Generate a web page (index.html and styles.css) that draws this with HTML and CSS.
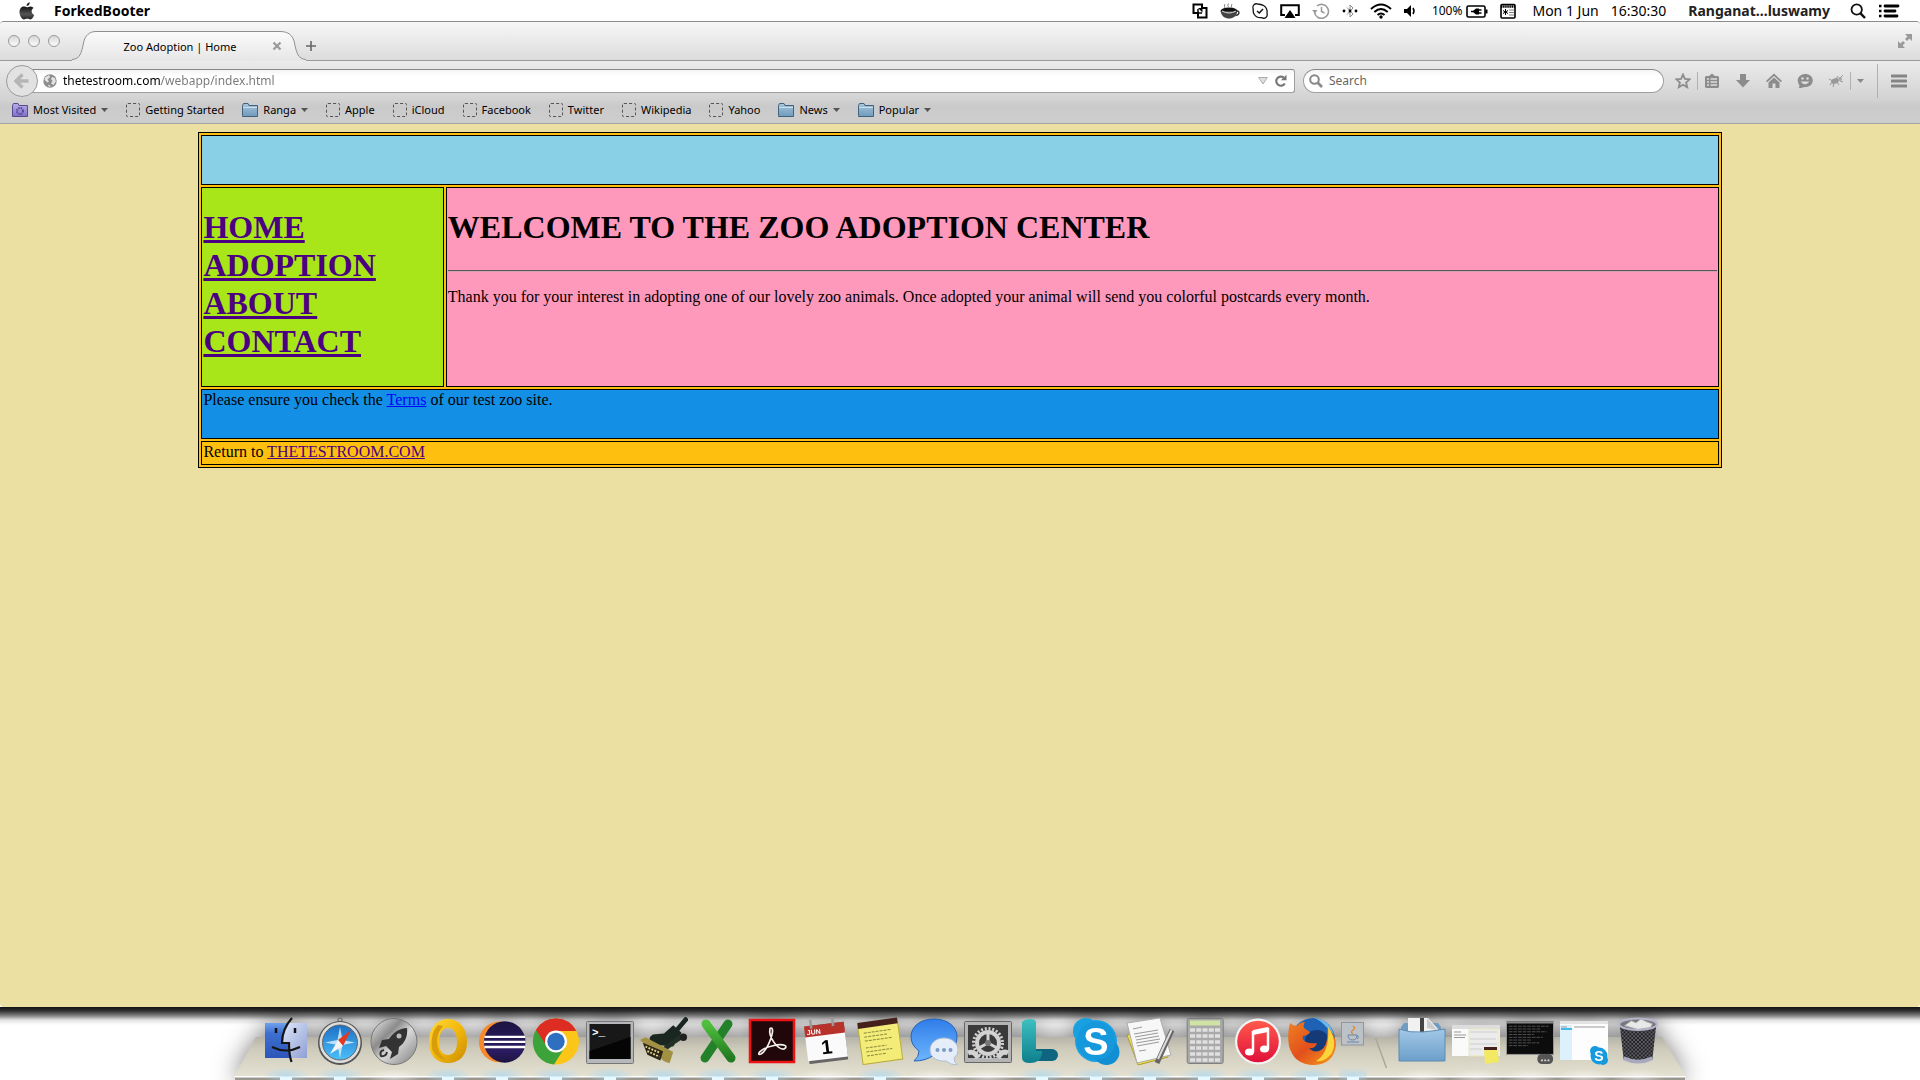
FILE: index.html
```html
<!DOCTYPE html>
<html lang="en">
<head>
<meta charset="utf-8">
<title>Zoo Adoption | Home</title>
<link rel="stylesheet" href="styles.css">
</head>
<body>
<svg class="defs" aria-hidden="true">
  <defs>
    <linearGradient id="g-fold" x1="0" y1="0" x2="0" y2="1"><stop offset="0" stop-color="#a9c7dc"/><stop offset="1" stop-color="#6e9abb"/></linearGradient>
    <linearGradient id="g-violet" x1="0" y1="0" x2="0" y2="1"><stop offset="0" stop-color="#b9aee8"/><stop offset="1" stop-color="#8070c4"/></linearGradient>
    <linearGradient id="g-finder" x1="0" y1="0" x2="0" y2="1"><stop offset="0" stop-color="#6fa0ee"/><stop offset=".3" stop-color="#3c6fd0"/><stop offset="1" stop-color="#2d55ba"/></linearGradient>
    <linearGradient id="g-finder2" x1="0" y1="0" x2="1" y2="1"><stop offset="0" stop-color="#dfe8fa"/><stop offset="1" stop-color="#8f9fd4"/></linearGradient>
    <linearGradient id="g-silver" x1="0" y1="0" x2="1" y2="1"><stop offset="0" stop-color="#f2f2f2"/><stop offset=".35" stop-color="#8b8b8b"/><stop offset=".55" stop-color="#d9d9d9"/><stop offset="1" stop-color="#7c7c7c"/></linearGradient>
    <linearGradient id="g-safari" x1="0" y1="0" x2="0" y2="1"><stop offset="0" stop-color="#1c6fc4"/><stop offset="1" stop-color="#4cc0fb"/></linearGradient>
    <linearGradient id="g-gold" x1="0" y1="0" x2="1" y2="1"><stop offset="0" stop-color="#ffd83c"/><stop offset=".5" stop-color="#f3b90c"/><stop offset="1" stop-color="#c98a00"/></linearGradient>
    <linearGradient id="g-ecl" x1="0" y1="0" x2="0" y2="1"><stop offset="0" stop-color="#1d1440"/><stop offset=".7" stop-color="#2b1c63"/><stop offset="1" stop-color="#1d1440"/></linearGradient>
    <linearGradient id="g-green" x1="0" y1="0" x2="0" y2="1"><stop offset="0" stop-color="#4fc03c"/><stop offset="1" stop-color="#227a22"/></linearGradient>
    <linearGradient id="g-msg" x1="0" y1="0" x2="0" y2="1"><stop offset="0" stop-color="#2f7de8"/><stop offset="1" stop-color="#6db6ff"/></linearGradient>
    <linearGradient id="g-lync" x1="0" y1="0" x2="0" y2="1"><stop offset="0" stop-color="#3cc0c0"/><stop offset="1" stop-color="#0f7f8c"/></linearGradient>
    <linearGradient id="g-itunes" x1="0" y1="0" x2="0" y2="1"><stop offset="0" stop-color="#ff5a4c"/><stop offset="1" stop-color="#e0103a"/></linearGradient>
    <linearGradient id="g-fox" x1="0" y1="0" x2="1" y2="1"><stop offset="0" stop-color="#f08020"/><stop offset=".5" stop-color="#e2501c"/><stop offset="1" stop-color="#f6a01c"/></linearGradient>
    <linearGradient id="g-dfold" x1="0" y1="0" x2="0" y2="1"><stop offset="0" stop-color="#a3c8e6"/><stop offset="1" stop-color="#6c9fca"/></linearGradient>
    <linearGradient id="g-apple" x1="0" y1="0" x2="0" y2="1"><stop offset="0" stop-color="#111"/><stop offset=".6" stop-color="#555"/><stop offset="1" stop-color="#222"/></linearGradient>
    <pattern id="p-mesh" width="4" height="4" patternUnits="userSpaceOnUse"><rect width="4" height="4" fill="#1e1e22"/><path d="M0 2L2 0L4 2L2 4Z" fill="none" stroke="#8a8a90" stroke-width=".6"/></pattern>
    <symbol id="i-folder" viewBox="0 0 16 14"><path d="M.5 12.500V2.500L1.500.500H6L7 2.500H15.500V13.500H.5Z" fill="url(#g-fold)" stroke="#42617c"/><path d="M1 4.500H15" stroke="#c9deec"/></symbol>
    <symbol id="i-caret" viewBox="0 0 7 4"><path d="M0 0H7L3.500 4Z"/></symbol>
  </defs>
</svg>

<header class="menubar">
  <svg class="apple" viewBox="0 0 16 18" width="16" height="18"><path d="M10.800.3C10.900 2.500 9.200 4.200 7.500 4.100C7.400 2.300 9 .5 10.800.3Z" fill="#222"/><path d="M8 5.200C9 5.200 9.800 4.400 11.300 4.400C12.800 4.400 14 5.200 14.600 6.100C11.600 7.900 12.200 11.700 15.200 13C14.500 15 13 17.500 11.400 17.500C10.200 17.500 9.600 16.800 8.200 16.800C6.800 16.800 6.200 17.500 5 17.500C2.800 17.500.5 13.500.5 10C.5 6.500 2.700 4.500 4.800 4.500C6.200 4.500 7.200 5.200 8 5.200Z" fill="url(#g-apple)"/></svg>
  <strong class="app-name">ForkedBooter</strong>
  <div class="status">
    <svg viewBox="0 0 16 16"><path d="M1.500 1.500H10V5H14.500V14.500H6V10H1.500Z" fill="none" stroke="#000" stroke-width="2"/><path d="M6 5H10.500V9.500Z" /><path d="M6 10V6M6 10H10" stroke="#000" stroke-width="1.500"/></svg>
    <svg viewBox="0 0 20 16"><ellipse cx="9" cy="8" rx="8.500" ry="3.500" fill="#111"/><path d="M.7 8C1 13 5 15.500 9 15.500S17 13 17.300 8Z" fill="#444"/><path d="M2 8Q9 12 16 8" fill="none" stroke="#ddd"/><path d="M17 8C20 8 19.500 12 15.500 12.500" fill="none" stroke="#333" stroke-width="1.500"/><path d="M5 5Q3.500 3 5 1M8.500 4Q7 2.500 8.500.5M12 5Q10.500 3 12 1" stroke="#888" fill="none"/></svg>
    <svg viewBox="0 0 16 16"><path d="M5 .8C2.500.5.5 2.500 1 5C1.600 6.500.5 8.500 2 11C4 14.500 7.500 14.800 9.500 14.600C13 16.500 16 13.500 15 10.500C15.500 7 14 4 11.500 2.500C9 1 7 1.500 5 .8Z" fill="none" stroke="#111" stroke-width="1.300"/><path d="M5 8L7.300 10L11 6" fill="none" stroke="#111" stroke-width="1.500"/></svg>
    <svg viewBox="0 0 20 16"><path d="M5 12H1.200V2.200H18.800V12H15" fill="none" stroke="#000" stroke-width="2"/><path d="M10 7L15.500 15H4.500Z"/></svg>
    <svg viewBox="0 0 18 16"><path d="M2.500 9A7 7 0 1 0 5 3" fill="none" stroke="#999" stroke-width="1.600"/><path d="M0 7L3 10.500L5.500 7Z" fill="#999"/><path d="M9.500 4V8.500L12.500 10" fill="none" stroke="#999" stroke-width="1.500"/></svg>
    <svg viewBox="0 0 16 16"><path d="M5 4.500L11 11L8 14V2L11 5L5 11.500" fill="none" stroke="#888"/><circle cx="2" cy="8" r="1.400"/><circle cx="8" cy="8" r="1.400"/><circle cx="14" cy="8" r="1.400"/></svg>
    <svg viewBox="0 0 22 16"><path d="M1 6Q11-3 21 6M4.300 9Q11 3 17.700 9M7.500 12Q11 9 14.500 12" fill="none" stroke="#000" stroke-width="2"/><circle cx="11" cy="14" r="1.700"/></svg>
    <svg viewBox="0 0 16 16"><path d="M0 6H3L7 2V14L3 10H0Z"/><path d="M9 5Q11 8 9 11" fill="none" stroke="#000" stroke-width="1.500"/></svg>
    <span class="percent">100%</span>
    <svg viewBox="0 0 22 16"><rect x="1" y="3" width="18" height="11" rx="1.500" fill="none" stroke="#000" stroke-width="1.600"/><path d="M20.500 6.500V10.500" stroke="#000" stroke-width="2"/><path d="M5 8.500H8M13 7H15.500M13 10H15.500" stroke="#000" stroke-width="1.400"/><path d="M13 5.500V11.500H10L7.500 9.500V7.500L10 5.500Z"/></svg>
    <svg viewBox="0 0 16 16"><rect x="1" y="1.500" width="14" height="13.500" rx="1" fill="#fff" stroke="#000" stroke-width="1.600"/><path d="M1 3.500H15" stroke="#000" stroke-width="2.500" stroke-dasharray="1.500 .6"/><path d="M5.500 6V12M3 7.500L8 10.500M8 7.500L3 10.500" stroke="#000"/><path d="M9.500 7H14M9.500 9.500H14M9.500 12H14" stroke="#000" stroke-dasharray="1 1"/></svg>
    <time class="date">Mon 1 Jun</time>
    <time class="clock">16:30:30</time>
    <strong class="user">Ranganat…luswamy</strong>
    <svg viewBox="0 0 16 16"><circle cx="6.700" cy="6.500" r="5.200" fill="none" stroke="#111" stroke-width="1.800"/><path d="M10.500 10.300L15 15" stroke="#111" stroke-width="2.400"/></svg>
    <svg viewBox="0 0 22 16"><path d="M7 3H20M7 8H17M7 13H19" stroke="#000" stroke-width="2.800" stroke-linecap="round"/><path d="M1 3H3.500M1 8H3.500M1 13H3.500" stroke="#000" stroke-width="2.600"/></svg>
  </div>
</header>

<div class="window">
  <div class="tabstrip">
    <div class="lights"><button aria-label="Close"></button><button aria-label="Minimize"></button><button aria-label="Zoom"></button></div>
    <div class="tab">
      <svg class="tab-shape" viewBox="0 0 234 30" width="234" height="30"><defs><linearGradient id="g-tab" x1="0" y1="0" x2="0" y2="1"><stop offset="0" stop-color="#fbfbfb"/><stop offset="1" stop-color="#e6e6e6"/></linearGradient></defs><path d="M0 28.500C8 28 9.500 22 11.500 12C13 4 18 .5 24 .5H208C216 .5 221 4 222.500 12C224.500 22 226 28 234 28.500V30H0Z" fill="url(#g-tab)"/><path d="M0 28.500C8 28 9.500 22 11.500 12C13 4 18 .5 24 .5H208C216 .5 221 4 222.500 12C224.500 22 226 28 234 28.500" fill="none" stroke="#8f8f8f"/></svg>
      <span class="tab-title">Zoo Adoption | Home</span>
      <button class="tab-close" aria-label="Close tab"><svg viewBox="0 0 10 10" width="10" height="10"><path d="M1.500 1.500L8.500 8.500M8.500 1.500L1.500 8.500" stroke="#999" stroke-width="2.200"/></svg></button>
    </div>
    <button class="new-tab" aria-label="New tab"><svg viewBox="0 0 10 10" width="10" height="10"><path d="M5 0V10M0 5H10" stroke="#666" stroke-width="1.600"/></svg></button>
    <button class="fullscreen" aria-label="Full screen"><svg viewBox="0 0 14 14" width="14" height="14" fill="#999"><path d="M7 0H14V7L11.500 4.500L9 7L7 5L9.500 2.500ZM0 7L2.500 9.500L5 7L7 9L4.500 11.500L7 14H0Z"/></svg></button>
  </div>

  <div class="toolbar">
    <button class="back" aria-label="Back"><svg viewBox="0 0 16 16" width="16" height="16"><path d="M8.500 1.500L2 8L8.500 14.500M2.500 8H14.500" fill="none" stroke="#b5b5b5" stroke-width="3.400"/></svg></button>
    <div class="urlbar">
      <svg viewBox="0 0 14 14" width="14" height="14"><circle cx="7" cy="7" r="6.700" fill="#8d8d8d"/><path d="M2 3.500L6 1L7 3L4.500 5.500L6 7.500L4.500 8.500L1.500 6ZM9 3L12 4L12.800 7.500L10.500 11L8 9.500L9.500 7L8 5ZM5 10.500L8 12L6 13Z" fill="#e4e4e4"/></svg>
      <input class="url" aria-label="Address" value="thetestroom.com/webapp/index.html">
      <svg viewBox="0 0 10 8" width="10" height="8"><path d="M.7.5H9.300L5 7Z" fill="#e0e0e0" stroke="#aaa"/></svg>
      <button aria-label="Reload"><svg viewBox="0 0 14 14" width="14" height="14"><path d="M10.800 9.500A4.600 4.600 0 1 1 9.800 3.600" fill="none" stroke="#777" stroke-width="2.200"/><path d="M6.800 6.300H12.500V.8Z" fill="#777"/></svg></button>
    </div>
    <div class="searchbar">
      <svg viewBox="0 0 14 14" width="14" height="14"><circle cx="5.500" cy="5.500" r="4.300" fill="none" stroke="#888" stroke-width="2"/><path d="M8.500 8.500L13 13" stroke="#888" stroke-width="2.600"/></svg>
      <input aria-label="Search" placeholder="Search">
    </div>
    <div class="tools">
      <button aria-label="Bookmark"><svg viewBox="0 0 16 16"><path d="M8 1.500L9.900 5.900L14.700 6.300L11.100 9.500L12.200 14.200L8 11.700L3.800 14.200L4.900 9.500L1.300 6.300L6.100 5.900Z" fill="none" stroke="#8c8c8c" stroke-width="1.800"/></svg></button>
      <i class="sep"></i>
      <button aria-label="Bookmarks list"><svg viewBox="0 0 16 16"><path d="M2 3H5L8 .5L11 3H14L15 4V14L14 15H2L1 14V4Z" fill="#8c8c8c"/><path d="M3 6H5M6.500 6H13M3 9H5M6.500 9H13M3 12H5M6.500 12H13" stroke="#ddd" stroke-width="1.500"/></svg></button>
      <button aria-label="Downloads"><svg viewBox="0 0 16 16"><path d="M5 1H11V7H15L8 14.500L1 7H5Z" fill="#8c8c8c"/></svg></button>
      <button aria-label="Home"><svg viewBox="0 0 16 16"><path d="M8 .5L16 8L14.800 9.200L8 3L1.200 9.200L0 8ZM8 4.500L13.500 9.500V15H9.500V10.500H6.500V15H2.500V9.500Z" fill="#8c8c8c"/></svg></button>
      <button aria-label="Chat"><svg viewBox="0 0 16 16"><path d="M8 1C12.500 1 15.800 3.700 15.800 7.500S12.500 14 8 14C6.500 14 4 15.500 1.500 15C2.800 14 2.500 12.500 2 11.500C-1.500 6.500 2.500 1 8 1Z" fill="#8c8c8c"/><circle cx="5.500" cy="5.500" r="1.200" fill="#ddd"/><circle cx="10.500" cy="5.500" r="1.200" fill="#ddd"/><path d="M3.500 8.500H12.500Q8 14 3.500 8.500Z" fill="#ddd"/></svg></button>
      <button aria-label="Firebug"><svg viewBox="0 0 16 16"><ellipse cx="7" cy="8" rx="4" ry="2.600" fill="#999" transform="rotate(-20 7 8)"/><circle cx="12" cy="6" r="2" fill="#aaa"/><path d="M1 6L5 8L2 12M6 10L5 14M9 9L11 12M8 6L10 3M12 5L15 2M12 8L15 9" stroke="#999" fill="none"/></svg></button>
      <i class="sep"></i>
      <svg class="caret" width="7" height="4" fill="#888"><use href="#i-caret"/></svg>
      <i class="sep tall"></i>
      <button aria-label="Menu"><svg viewBox="0 0 16 16"><path d="M1 3H15M1 8H15M1 13H15" stroke="#858585" stroke-width="3" stroke-linecap="round"/></svg></button>
    </div>
  </div>

  <nav class="bookmarks" aria-label="Bookmarks">
    <button><svg width="16" height="14" viewBox="0 0 16 14"><path d="M.5 13.500V2.500L1.500.5H6L7 2.500H15.500V13.500Z" fill="url(#g-violet)" stroke="#554a8c"/><circle cx="8" cy="8" r="3" fill="none" stroke="#5a48a0" stroke-width="2" stroke-dasharray="1.600 .8"/></svg>Most Visited<svg class="caret" width="7" height="4"><use href="#i-caret"/></svg></button>
    <a href="#"><i class="blank"></i>Getting Started</a>
    <button><svg width="16" height="14"><use href="#i-folder"/></svg>Ranga<svg class="caret" width="7" height="4"><use href="#i-caret"/></svg></button>
    <a href="#"><i class="blank"></i>Apple</a>
    <a href="#"><i class="blank"></i>iCloud</a>
    <a href="#"><i class="blank"></i>Facebook</a>
    <a href="#"><i class="blank"></i>Twitter</a>
    <a href="#"><i class="blank"></i>Wikipedia</a>
    <a href="#"><i class="blank"></i>Yahoo</a>
    <button><svg width="16" height="14"><use href="#i-folder"/></svg>News<svg class="caret" width="7" height="4"><use href="#i-caret"/></svg></button>
    <button><svg width="16" height="14"><use href="#i-folder"/></svg>Popular<svg class="caret" width="7" height="4"><use href="#i-caret"/></svg></button>
  </nav>

  <div class="viewport">
    <div class="site">
      <header class="cell banner"></header>
      <nav class="cell menu" aria-label="Site">
        <a href="#">HOME</a>
        <a href="#">ADOPTION</a>
        <a href="#">ABOUT</a>
        <a href="#">CONTACT</a>
      </nav>
      <main class="cell content">
        <h1>WELCOME TO THE ZOO ADOPTION CENTER</h1>
        <hr>
        <p>Thank you for your interest in adopting one of our lovely zoo animals. Once adopted your animal will send you colorful postcards every month.</p>
      </main>
      <section class="cell terms">Please ensure you check the <a href="#">Terms</a> of our test zoo site.</section>
      <footer class="cell return">Return to <a href="#">THETESTROOM.COM</a></footer>
    </div>
  </div>
</div>

<footer class="desktop">
  <ul class="dock">
    <li class="on"><svg viewBox="0 0 48 48"><rect x="3" y="6" width="42" height="35" fill="url(#g-finder)"/><path d="M27 6H45V41H28L27 26H20Q20 14 27 6Z" fill="url(#g-finder2)"/><path d="M14 11V16M33 11V16" stroke="#111" stroke-width="2.500"/><path d="M30 1Q20 12 20 26H27Q27 38 29.500 45M10 30Q24 37 38 30" fill="none" stroke="#151515" stroke-width="2.200"/></svg></li>
    <li class="on"><svg viewBox="0 0 48 48"><circle cx="24" cy="3" r="2" fill="none" stroke="#777" stroke-width="1.500"/><circle cx="24" cy="26" r="22" fill="#555"/><circle cx="24" cy="25.500" r="20.500" fill="#ddd"/><circle cx="24" cy="25.500" r="17.500" fill="url(#g-safari)" stroke="#666"/><path d="M24 10L26.500 23L39 25.500L26.500 28L24 41L21.500 28L9 25.500L21.500 23Z" fill="#d6ecfb" opacity=".85"/><path d="M35 13L27 29L22 23Z" fill="#e5391f"/><path d="M14 37L22 23L27 29Z" fill="#f4f4f4"/></svg></li>
    <li><svg viewBox="0 0 48 48"><circle cx="24" cy="24.500" r="23" fill="url(#g-silver)" stroke="#777"/><path d="M37 11C29 11 23 16 19 22L12 23L9 31L16 29L22 35L20 42L28 37L29 30C35 26 38 19 37 11Z" fill="#333"/><circle cx="29" cy="19" r="2.500" fill="#bbb"/><path d="M14 33Q9 34 11 39Q16 40 17 35" fill="none" stroke="#333" stroke-width="2"/></svg></li>
    <li class="on"><svg viewBox="0 0 48 48"><path fill-rule="evenodd" d="M24 2C36 2 43 12 43 25S36 46 24 46S5 38 5 25S12 2 24 2ZM24 11C18 11 15 17 15 25S18 38 24 38S33 33 33 25S30 11 24 11Z" fill="url(#g-gold)"/><path d="M14 8Q6 16 8 32Q12 42 22 43Q13 36 13 25Q13 16 19 9Z" fill="#d99c0a"/></svg></li>
    <li class="on"><svg viewBox="0 0 52 48"><circle cx="23" cy="25" r="22" fill="#f7892b"/><circle cx="29" cy="25" r="22.500" fill="url(#g-ecl)"/><path d="M7 19.500H51M6.500 25H51.500M7 30.500H51" stroke="#fff" stroke-width="2.500"/></svg></li>
    <li class="on"><svg viewBox="0 0 48 48"><circle cx="24" cy="24.500" r="23" fill="#fbc618"/><path d="M24 24.500L4 13A23 23 0 0 1 44 13.500H24Z" fill="#d9291c"/><path d="M24 24.500L4 13A23 23 0 0 0 22 47.500L33 30Z" fill="#3ba33a"/><path d="M4 13A23 23 0 0 1 44.300 14H24L14 28Z" fill="#dd2d22"/><circle cx="24" cy="24.500" r="11" fill="#fff"/><circle cx="24" cy="24.500" r="8.700" fill="#2f6fc0"/></svg></li>
    <li class="on"><svg viewBox="0 0 48 48"><rect x=".5" y="4.500" width="47" height="42" rx="1" fill="#b5b7ba" stroke="#777"/><rect x="3.500" y="7" width="41" height="35" fill="#181818"/><path d="M3.500 42V34L44.500 20V42Z" fill="#050505"/><text x="6" y="19" class="mono">&gt;_</text></svg></li>
    <li class="on"><svg viewBox="0 0 52 52"><path d="M51 1L40 14" stroke="#1a2420" stroke-width="5"/><path d="M36 9L45 17L36 32L16 30Q6 24 14 19L26 18Z" fill="#1a2620"/><path d="M26 35L38 26L47 20" fill="none" stroke="#222f27" stroke-width="5"/><circle cx="47" cy="22" r="4" fill="#222"/><path d="M0 25L6 22L36 38L32 50L26 48Z" fill="#a39143"/><path d="M3 28L25 37L22 47L8 41Z" fill="#2a2517"/><path d="M6 32L22 39M8 37L21 43" stroke="#ecd98a" stroke-width="2" stroke-dasharray="2 1.500"/></svg></li>
    <li class="on"><svg viewBox="0 0 48 48"><path d="M34 7L11 41" stroke="#23812a" stroke-width="9" stroke-linecap="round"/><path d="M12 7L37 41" stroke="url(#g-green)" stroke-width="9" stroke-linecap="round"/></svg></li>
    <li class="on"><svg viewBox="0 0 48 48"><rect x="2" y="3" width="44" height="42" fill="#22070a" stroke="#ee1313" stroke-width="2.500"/><path d="M23 11C28 11 20 33 13 37C8 39 11 32 24 29C36 26 41 29 36 32C30 33 20 20 22 12Q22 11 23 11Z" fill="none" stroke="#f4efef" stroke-width="1.700"/></svg></li>
    <li><svg viewBox="0 0 48 48"><g transform="rotate(-7 24 25)"><rect x="5" y="7" width="39" height="38" rx="1" fill="#666"/><rect x="4" y="16" width="40" height="26" fill="#fafafa"/><path d="M4 7H44V18H4Z" fill="#b8322c"/><path d="M11 1V10M33 1V10" stroke="#999" stroke-width="2.500"/><text x="6" y="16" class="month">JUN</text><text x="24" y="37" class="day">1</text></g></svg></li>
    <li class="on"><svg viewBox="0 0 48 48"><g transform="rotate(-8 24 24)"><rect x="4" y="5" width="40" height="40" fill="#f3ec78" stroke="#b9ae38"/><path d="M4 3H44V9H4Z" fill="#46201a"/><path d="M9 14H36M9 18H32M9 22H37M9 29H30M9 33H35M9 37H28" stroke="#8a883c" stroke-dasharray="3 1"/></g></svg></li>
    <li><svg viewBox="0 0 48 48"><path d="M24 2C37 2 47 9 47 20S38 38 24 38Q16 44 4 44Q9 40 9 34Q1 28 1 20C1 9 11 2 24 2Z" fill="url(#g-msg)" stroke="#2861b8"/><path d="M34 21C42 21 48 26 48 33Q48 38 44 41Q44 46 48 48Q40 48 36 44C27 45 20 40 20 33S26 21 34 21Z" fill="#e4edf8" stroke="#aebdd0"/><g fill="#7a9cc6"><circle cx="27.500" cy="33" r="2"/><circle cx="34" cy="33" r="2"/><circle cx="40.500" cy="33" r="2"/></g></svg></li>
    <li><svg viewBox="0 0 48 48"><rect x=".5" y="4.500" width="47" height="41" rx="1" fill="#b4b4b4" stroke="#666"/><rect x="4" y="8" width="40" height="33" fill="#3a3a3a"/><g fill="none" stroke="#d2d2d2"><circle cx="24" cy="26" r="11" stroke-width="4"/><circle cx="24" cy="26" r="14.500" stroke-width="3" stroke-dasharray="2 1.800"/><path d="M24 26V14M24 26L13 32M24 26L35 32" stroke-width="3"/><path d="M4 36Q10 33 14 41M44 36Q38 33 34 41" stroke-width="5"/></g><circle cx="24" cy="26" r="3" fill="#777"/></svg></li>
    <li class="on"><svg viewBox="0 0 48 48"><path d="M17 32H34A6 6 0 0 1 34 44H15Z" fill="#0e6580"/><path d="M4 5Q7 2 12 2Q18 2 18 6V34L24 34Q24 46 12 46Q4 46 4 41Z" fill="url(#g-lync)"/></svg></li>
    <li class="on"><svg viewBox="0 0 48 48"><circle cx="24" cy="24" r="21" fill="#18a0e0"/><circle cx="14" cy="14" r="13" fill="#18a0e0"/><circle cx="34.500" cy="35" r="13" fill="#128fd2"/><circle cx="24" cy="24" r="19" fill="#1698dc"/><text x="24" y="38" class="skype">S</text></svg></li>
    <li class="on"><svg viewBox="0 0 48 48"><path d="M1 18L34 12L42 40L12 48Z" fill="#f2e24b" stroke="#a99c2c"/><path d="M1 6L34 1L45 38L11 46Z" fill="#f7f7f7" stroke="#aaa"/><path d="M7 12L16 10M8 17L32 13M9 20L32 16M10 23L33 19M10 26L34 22M11 29L33 25M13 34L20 33" stroke="#999"/><path d="M46 13L31 46" stroke="#666" stroke-width="5"/><path d="M45.500 13L32 42" stroke="#ddd" stroke-width="2"/></svg></li>
    <li class="on"><svg viewBox="0 0 48 48"><rect x="1.500" y="1.500" width="45" height="45" rx="2" fill="#a9a9a9" stroke="#777" transform="translate(6 0) scale(.8 1)"/><rect x="10" y="3.500" width="30" height="5" fill="#cfe3a5"/><path d="M10 13H40M10 19H40M10 25H40M10 31H40M10 37H40M10 43H40" stroke="#e0e0e0" stroke-width="3.500" stroke-dasharray="5 1.250"/></svg></li>
    <li class="on"><svg viewBox="0 0 48 48"><circle cx="24" cy="24.500" r="23" fill="#f3f3f3"/><circle cx="24" cy="24.500" r="20.800" fill="url(#g-itunes)"/><path d="M19 35V15L34 12V32" fill="none" stroke="#fff" stroke-width="2.500"/><path d="M19 13L34 10V15L19 18Z" fill="#fff"/><ellipse cx="15.500" cy="35" rx="4.500" ry="3.500" fill="#fff"/><ellipse cx="30.500" cy="32" rx="4.500" ry="3.500" fill="#fff"/></svg></li>
    <li class="on"><svg viewBox="0 0 48 48"><circle cx="25" cy="23" r="22" fill="#1d62b4"/><path d="M26 1Q42 3 46 18L40 12Q34 4 26 1Z" fill="#69b8ee"/><ellipse cx="29" cy="24" rx="12" ry="11" fill="#143a78"/><path d="M2 6Q5 9 9 9Q12 5 17 5Q15 8 16 11L22 15Q21 18 15 19Q14 23 18 25Q23 27 29 26Q27 32 21 31Q26 37 33 33Q41 28 39 10Q48 18 48 28Q46 47 26 48Q6 48 1 29Q-1 17 2 6Z" fill="url(#g-fox)"/><path d="M40 10Q50 24 44 36Q36 46 28 44Q42 36 40 10Z" fill="#fbd53a"/></svg></li>
    <li class="small on"><svg viewBox="0 0 24 24"><rect x=".5" y=".5" width="22" height="22.500" fill="#bcc2c8" stroke="#8f969d"/><path d="M12 4Q15 6 12 8T12 12" fill="none" stroke="#dd8b33" stroke-width="1.500"/><path d="M7 13H16Q16 18 11.500 18T7 13ZM16 14Q19 14 16 17M6 20H18" fill="none" stroke="#6985a5"/></svg></li>
    <li class="divider"><svg viewBox="0 0 12 30" width="12" height="30"><path d="M.5 0L11.500 30" stroke="#aaa799" stroke-width="1.500"/></svg></li>
    <li><svg viewBox="0 0 48 48"><path d="M3 10L6 6H40L43 10V20H3Z" fill="#6f9cc2"/><path d="M10 1H30L40 12V16H10Z" fill="#f1f1f1"/><path d="M24 1V15" stroke="#444" stroke-width="4"/><path d="M29 1L39 13L29 11Z" fill="#ccc"/><path d="M1 12Q12 16 24 15T47 12V44H1Z" fill="url(#g-dfold)" stroke="#5d8bb2"/></svg></li>
    <li><svg viewBox="0 0 48 48"><rect y="8" width="48" height="31" fill="#fafafa"/><path d="M0 8H48V12H0Z" fill="#ddd"/><path d="M17 12H47V39H17Z" fill="#ececec" stroke="#e8e6b8"/><path d="M2 15H9M2 18H14M2 20.500H13" stroke="#999"/><path d="M18 15H45M18 22H44M18 27H45M18 32H30" stroke="#ccc"/><path d="M32 31H45L47 45L33 47Z" fill="#f2e862"/><path d="M32 30H45V33H32Z" fill="#46201a"/></svg></li>
    <li><svg viewBox="0 0 52 52"><rect x=".5" y="4.500" width="51" height="36" fill="#0c0c0c" stroke="#999"/><path d="M1 5H51V7H1Z" fill="#888"/><path d="M3 10H46M3 13H38M3 16H44M3 19H30M3 22H40M3 25H28M3 28H36M3 31H24" stroke="#555" stroke-dasharray="4 1"/><rect x="34" y="40" width="17" height="11" rx="5" fill="#555"/><path d="M38 47H48" stroke="#ddd" stroke-width="2" stroke-dasharray="2 1.500"/></svg></li>
    <li><svg viewBox="0 0 48 48"><rect y="4" width="48" height="39" fill="#fdfdfd"/><path d="M0 8H12V43H0Z" fill="#dcf1fb"/><path d="M0 4H48V7H0Z" fill="#e3e3e3"/><path d="M1 10H7M14 10H45" stroke="#999"/><path d="M1 12H12" stroke="#41b8e8" stroke-width="2"/><circle cx="39" cy="39" r="8.500" fill="#159bdd"/><circle cx="35" cy="34" r="5" fill="#159bdd"/><circle cx="43" cy="43" r="5" fill="#159bdd"/><text x="39" y="44" class="skype-badge">S</text></svg></li>
    <li><svg viewBox="0 0 44 50"><path d="M3 8H41L37 44Q22 50 7 44Z" fill="url(#p-mesh)"/><ellipse cx="22" cy="8" rx="19" ry="6" fill="#777"/><path d="M8 9L15 4L20 6L25 2L31 5L37 7L35 11L22 13Z" fill="#e8e8e8" stroke="#aaa"/><ellipse cx="22" cy="7.500" rx="19.500" ry="6" fill="none" stroke="#b4b4cc" stroke-width="2.200"/><path d="M7 43Q22 50 37 43" fill="none" stroke="#a9a9be" stroke-width="4"/></svg></li>
  </ul>
</footer>
</body>
</html>
```

FILE: styles.css
```css
* { box-sizing: border-box; }

body {
  margin: 0;
  min-height: 100vh;
  display: flex;
  flex-direction: column;
  background: #fff;
  color: #000;
  font-family: "Lucida Grande", "Noto Sans", sans-serif;
}

svg { display: block; flex: none; }
.defs { position: absolute; width: 0; height: 0; }

button {
  display: flex;
  align-items: center;
  justify-content: center;
  padding: 0;
  border: 0;
  background: none;
  color: inherit;
  font: inherit;
}

input {
  min-width: 0;
  padding: 0;
  border: 0;
  outline: 0;
  background: none;
  font: inherit;
}

/* Menu bar */
.menubar {
  display: flex;
  align-items: center;
  height: 21px;
  padding: 0 20px 0 19px;
  font-size: 14px;
  line-height: 20px;
  white-space: nowrap;
}
.app-name { margin-left: 19px; }
.status {
  display: flex;
  align-items: center;
  gap: 12px;
  margin-left: auto;
}
.status svg { height: 16px; }
.percent { font-size: 12px; margin-right: -8px; }
.date { margin-left: 4px; }
.user { margin: 0 8px 0 10px; color: #222; }

/* Browser window */
.window {
  flex: 1;
  display: flex;
  flex-direction: column;
  border-top: 1px solid #8c8c8c;
  border-radius: 4px;
  overflow: hidden;
  background: #ebdfa2;
}

.tabstrip {
  display: flex;
  align-items: center;
  height: 39px;
  padding: 0 8px;
  border-bottom: 1px solid #9a9a9a;
  background: linear-gradient(#f7f7f7, #dcdcdc);
}
.lights { display: flex; gap: 8px; }
.lights button {
  width: 12px;
  height: 12px;
  border: 1px solid #9a9a9a;
  border-radius: 50%;
  background: linear-gradient(#d8d8d8, #fbfbfb);
}
.tab {
  position: relative;
  display: flex;
  align-items: center;
  width: 234px;
  height: 30px;
  margin: 10px 0 0 12px;
  padding: 0 24px 0 16px;
}
.tab-shape { position: absolute; left: 0; top: 0; }
.tab-title {
  position: relative;
  flex: 1;
  text-align: center;
  font-size: 11px;
}
.tab-close { position: relative; }
.new-tab { margin-top: 10px; }
.fullscreen { margin-left: auto; }

.toolbar {
  display: flex;
  align-items: center;
  height: 39px;
  padding: 0 13px 0 6px;
  background: linear-gradient(#ebebeb, #d2d2d2);
}
.back {
  position: relative;
  width: 32px;
  height: 32px;
  border: 1px solid #9c9c9c;
  border-radius: 50%;
  background: #e2e2e2;
}
.urlbar, .searchbar {
  display: flex;
  align-items: center;
  height: 24px;
  border: 1px solid #a0a0a0;
  border-top-color: #888;
  background: linear-gradient(#f4f4f4, #fff 6px);
  font-size: 12px;
}
.urlbar {
  flex: 1;
  gap: 6px;
  margin: 0 8px 0 -10px;
  padding: 0 6px 0 14px;
  border-radius: 0 3px 3px 0;
}
.url {
  flex: 1;
  background: linear-gradient(to right, #000 98px, #777 98px) text;
  -webkit-text-fill-color: transparent;
}
.searchbar {
  width: 361px;
  gap: 6px;
  padding: 0 12px 0 5px;
  border-radius: 12px;
}
.searchbar input { flex: 1; }
.searchbar input::placeholder { color: #666; }
.tools {
  display: flex;
  align-items: center;
  gap: 15px;
  margin-left: 11px;
}
.tools button svg { width: 16px; height: 16px; }
.sep {
  width: 1px;
  height: 18px;
  margin: 0 -9px;
  background: #b0b0b0;
}
.sep.tall { height: 34px; margin: 0 -2px; }

.bookmarks {
  display: flex;
  align-items: center;
  gap: 18px;
  height: 24px;
  padding: 0 12px 4px;
  border-bottom: 1px solid #a2a2a2;
  background: linear-gradient(#d2d2d2, #cacaca 6px, #cecece);
  font-size: 11px;
  white-space: nowrap;
}
.bookmarks a, .bookmarks button {
  display: flex;
  align-items: center;
  gap: 5px;
  color: #000;
  text-decoration: none;
}
.bookmarks .caret { fill: #555; }
.blank {
  width: 14px;
  height: 14px;
  border: 1px dashed #555;
  border-radius: 2px;
}

/* Zoo page */
.viewport {
  flex: 1;
  padding: 8px;
  font: 16px/18px "Times New Roman", "Liberation Serif", serif;
}
.site {
  display: grid;
  grid-template-columns: 16fr 84fr;
  gap: 2px;
  width: 80%;
  margin: 0 auto;
  padding: 2px;
  border: 1px solid #000;
  background: #ffbf0f;
}
.cell { padding: 1px; border: 1px solid #000; }
.banner, .terms, .return { grid-column: 1 / -1; }
.banner { height: 50px; background: #89d0e6; }
.menu {
  display: flex;
  flex-direction: column;
  align-items: flex-start;
  min-height: 200px;
  padding-top: 20px;
  background: #a8e61a;
  font: bold 32px/38px "Times New Roman", "Liberation Serif", serif;
}
.menu a, .return a { color: #4b0082; }
.content { background: #ff99bb; }
.content h1 { margin: 19px 0 24px; font-size: 32px; line-height: 38px; }
.content hr {
  margin: 0;
  border: 0;
  border-top: 1px solid #555;
  border-bottom: 1px solid #d5a0b0;
}
.content p { margin: 16px 0; }
.terms { min-height: 50px; background: #148fe6; }
.terms a { color: #00f; }
.return { height: 24px; }

/* Dock */
.desktop {
  display: flex;
  justify-content: center;
  height: 73px;
  overflow: hidden;
  background: linear-gradient(#111, #333 4px, #888 9px, #e2e2e2 13px, #fff 18px);
}
.dock {
  position: relative;
  z-index: 0;
  display: flex;
  margin: 0;
  padding: 10px 20px 0 24px;
  list-style: none;
  filter: drop-shadow(0 0 12px rgba(0, 0, 0, .5));
}
.dock::before {
  content: "";
  position: absolute;
  z-index: -1;
  inset: 30px 0 0;
  background: linear-gradient(#b5b3a8, #cfcbbb 12px, #e4e1d2 39px, #fff 39px, #fff 40px, #9a978e 41px);
  clip-path: polygon(21px 0, calc(100% - 23px) 0, 100% 38px, 100% 100%, 0 100%, 0 38px);
}
.dock li {
  display: flex;
  justify-content: center;
  align-items: flex-start;
  width: 54px;
  height: 63px;
  background: radial-gradient(ellipse 28px 8px at 50% 60px, rgba(255, 255, 255, .5), transparent);
}
.dock li.on {
  background: linear-gradient(#e8f8ff, #e8f8ff) 50% 60px / 12px 3px no-repeat,
    radial-gradient(ellipse 24px 8px at 50% 58px, rgba(170, 215, 240, .7), transparent);
}
.dock li svg { width: 48px; height: 48px; }
.dock li.small, .dock li.divider { width: 28px; }
.dock li.small svg { width: 24px; height: 24px; margin-top: 5px; }
.dock li.divider { background: none; align-items: center; }
.dock li.divider svg { width: 12px; height: 30px; margin-top: 8px; }
.mono { font: bold 11px "Liberation Mono", monospace; fill: #fff; }
.month { font: bold 7px "Liberation Sans", sans-serif; fill: #fff; }
.day { font: bold 20px "Liberation Sans", sans-serif; text-anchor: middle; }
.skype { font: bold 38px "Liberation Sans", sans-serif; text-anchor: middle; fill: #fff; }
.skype-badge { font: bold 14px "Liberation Sans", sans-serif; text-anchor: middle; fill: #fff; }
```
